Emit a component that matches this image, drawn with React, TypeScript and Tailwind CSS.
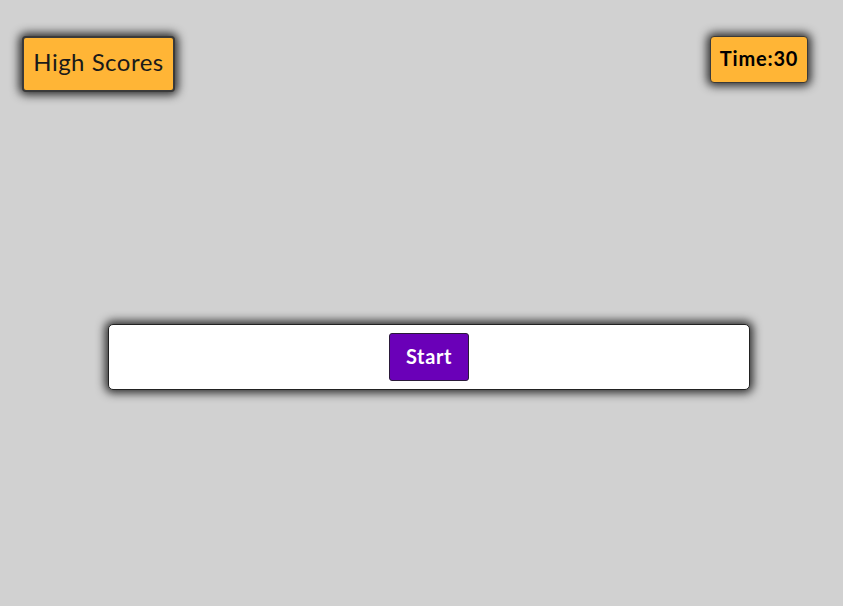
export default function App() {
  return (
    <div className="min-h-[606px] bg-[#d1d1d1] font-['Lato',sans-serif] overflow-hidden">
      {/* Top bar */}
      <div className="flex items-start justify-between pl-[22px] pr-[35px] pt-[36px]">
        <button className="w-[153px] h-[56px] pb-[4px] bg-[#ffb536] border-2 border-[#3a3a3a] rounded-[4px] shadow-[0_0_10px_3px_rgba(0,0,0,0.8)] text-[24px] tracking-[0.5px] text-[#1a1a1a]">
          High Scores
        </button>
        <div className="w-[98px] h-[47px] pb-[4px] flex items-center justify-center bg-[#ffb536] border border-[#3a3a3a] rounded-[4px] shadow-[0_0_10px_3px_rgba(0,0,0,0.8)] text-[20px] tracking-[0.8px] font-bold text-black">
          Time:30
        </div>
      </div>

      {/* Game panel */}
      <div className="ml-[108px] mt-[232px] w-[642px] h-[66px] bg-white rounded-[5px] border border-[#222] shadow-[0_0_10px_3px_rgba(0,0,0,0.8)] flex items-center justify-center">
        <button className="w-[80px] h-[48px] pb-[2px] bg-[#6a00b8] border border-[#2a1a3a] rounded-[3px] text-white text-[20px] tracking-[0.6px] font-bold">
          Start
        </button>
      </div>
    </div>
  );
}
